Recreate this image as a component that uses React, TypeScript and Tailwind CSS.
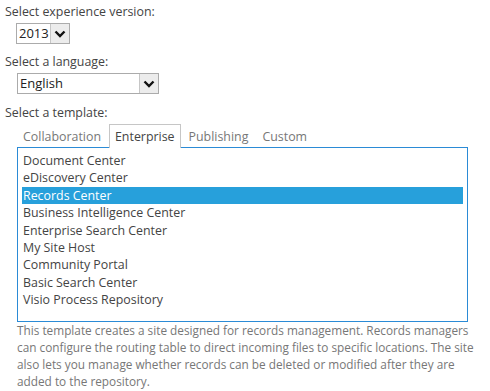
const templates = [
  'Document Center',
  'eDiscovery Center',
  'Records Center',
  'Business Intelligence Center',
  'Enterprise Search Center',
  'My Site Host',
  'Community Portal',
  'Basic Search Center',
  'Visio Process Repository',
];

const tabs = ['Collaboration', 'Enterprise', 'Publishing', 'Custom'];

function Chevron() {
  return (
    <svg width="12" height="8" viewBox="0 0 12 8">
      <polyline points="1.5,1.5 6,6 10.5,1.5" fill="none" stroke="#111" strokeWidth="2.4" />
    </svg>
  );
}

function FakeSelect({ value, width }: { value: string; width: string }) {
  return (
    <div className={`flex h-[21px] ${width} border border-[#ababab] bg-white`}>
      <span className="flex-1 pl-[2px] text-[13px] leading-[19px] text-[#222]">{value}</span>
      <span className="flex w-[19px] items-center justify-center border-l border-[#c6c6c6] bg-[#ececec]">
        <Chevron />
      </span>
    </div>
  );
}

export default function App() {
  const selected = 'Records Center';
  const activeTab = 'Enterprise';

  return (
    <div className="h-[391px] w-[490px] bg-white pl-[5px] pt-[3px] text-[12.4px] text-[#444]" style={{ fontFamily: '"Open Sans", sans-serif' }}>
      <div className="leading-[18px]">Select experience version:</div>
      <div className="ml-[11px] mt-[2px]">
        <FakeSelect value="2013" width="w-[54px]" />
      </div>

      <div className="mt-[9px] leading-[18px]">Select a language:</div>
      <div className="ml-[12px] mt-[2px]">
        <FakeSelect value="English" width="w-[142px]" />
      </div>

      <div className="mt-[10px] leading-[18px]">Select a template:</div>

      {/* Tabs */}
      <div className="ml-[12px] mt-[2px] flex h-[23px] items-end">
        {tabs.map((t) =>
          t === activeTab ? (
            <div
              key={t}
              className="relative -mb-px mr-[2px] h-[24px] border border-b-0 border-[#c6c6c6] bg-white px-[5px] pt-[2px] leading-[20px] text-[#444]"
            >
              {t}
            </div>
          ) : (
            <div key={t} className="mr-[2px] h-[23px] px-[6px] pt-[3px] leading-[20px] text-[#777]">
              {t}
            </div>
          )
        )}
      </div>

      {/* List */}
      <div className="ml-[12px] h-[175px] w-[451px] border border-[#2b8bd6] px-[4px] pt-[4px]">
        {templates.map((t) => (
          <div
            key={t}
            className={`h-[17.4px] pl-[1px] leading-[17.4px] ${t === selected ? 'bg-[#27a0db] text-white' : 'text-[#444]'}`}
          >
            {t}
          </div>
        ))}
      </div>

      <p className="ml-[12px] w-[470px] text-[11.8px] leading-[17px] text-[#777]">
        This template creates a site designed for records management. Records managers can configure the routing table to direct incoming files to specific locations. The site also lets you manage whether records can be deleted or modified after they are added to the repository.
      </p>
    </div>
  );
}
